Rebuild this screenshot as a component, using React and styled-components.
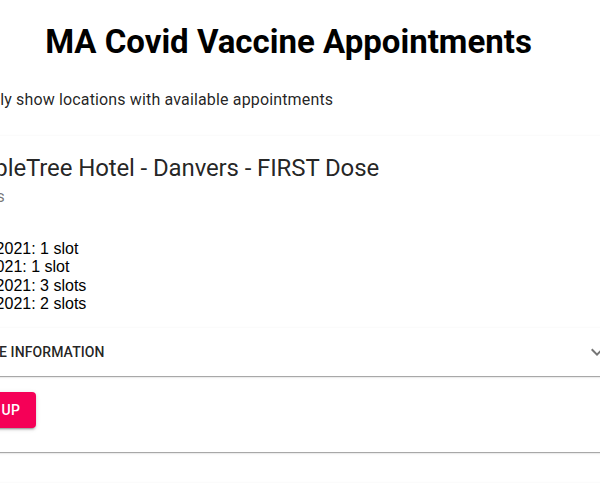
import React from "react";
import styled, { createGlobalStyle } from "styled-components";

const Global = createGlobalStyle`
  html, body { margin: 0; padding: 0; background: #fff; overflow: hidden; }
  body {
    font-family: Roboto, "Liberation Sans", Arial, sans-serif;
    color: rgba(0, 0, 0, 0.87);
    -webkit-font-smoothing: antialiased;
  }
`;

const Page = styled.main`
  width: 705px;
  margin-left: -64px;
`;

const Title = styled.h1`
  margin: 23px 0 19px;
  font-family: Roboto, "Liberation Sans", sans-serif;
  font-weight: 700;
  font-size: 33px;
  line-height: 37px;
  color: #000;
  text-align: center;
`;

const FilterRow = styled.label`
  display: flex;
  align-items: center;
  height: 42px;
  margin-left: 2px;
  margin-top: 1px;
  font-size: 16px;
  line-height: 24px;
  letter-spacing: 0.15px;
  cursor: pointer;
`;

const CheckBox = styled.span`
  display: flex;
  align-items: center;
  justify-content: center;
  width: 42px;
  height: 42px;
  color: rgba(0, 0, 0, 0.54);
`;

const CardList = styled.div`
  display: flex;
  flex-direction: column;
  gap: 31px;
  margin-top: 15px;
`;

const Card = styled.section`
  background: #fff;
  border-radius: 4px;
  box-shadow: 0px 2px 1px -1px rgba(0, 0, 0, 0.2), 0px 1px 1px 0px rgba(0, 0, 0, 0.14),
    0px 1px 3px 0px rgba(0, 0, 0, 0.12);
`;

const CardContent = styled.div`
  padding: 16px 16px 24px;
`;

const CardTitle = styled.h2`
  margin: 0;
  font-size: 24px;
  font-weight: 400;
  line-height: 32px;
  letter-spacing: -0.12px;
`;

const Town = styled.p`
  margin: 0 0 0 -6px;
  padding-top: 1px;
  font-size: 16px;
  line-height: 24px;
  letter-spacing: 0.15px;
  color: rgba(0, 0, 0, 0.54);
`;

const SlotList = styled.div`
  margin: 31px 0 14px;
  padding-left: 8px;
  font-family: "Liberation Sans", Arial, sans-serif;
  font-size: 16px;
  line-height: 18.4px;
  color: #000;
`;

const Accordion = styled.div`
  background: #fff;
  border-radius: 4px;
  box-shadow: 0px 2px 1px -1px rgba(0, 0, 0, 0.2), 0px 1px 1px 0px rgba(0, 0, 0, 0.14),
    0px 1px 3px 0px rgba(0, 0, 0, 0.12);
`;

const Summary = styled.button`
  display: flex;
  align-items: center;
  justify-content: space-between;
  width: 100%;
  min-height: 48px;
  padding: 0 16px;
  border: 0;
  background: transparent;
  font-family: Roboto, sans-serif;
  font-size: 14px;
  font-weight: 500;
  letter-spacing: 0.1px;
  text-transform: uppercase;
  color: rgba(0, 0, 0, 0.87);
  cursor: pointer;
`;

const ExpandIcon = styled.span`
  display: flex;
  padding: 12px;
  margin-right: -12px;
  color: rgba(0, 0, 0, 0.54);
`;

const SignUp = styled.button`
  margin-top: 16px;
  margin-left: -4px;
  min-width: 64px;
  height: 36px;
  padding: 6px 16px;
  border: 0;
  border-radius: 4px;
  background: #f50057;
  color: #fff;
  font-family: Roboto, sans-serif;
  font-size: 14px;
  font-weight: 500;
  letter-spacing: 0.4px;
  text-transform: uppercase;
  box-shadow: 0px 3px 1px -2px rgba(0, 0, 0, 0.2), 0px 2px 2px 0px rgba(0, 0, 0, 0.14),
    0px 1px 5px 0px rgba(0, 0, 0, 0.12);
  cursor: pointer;
`;

const locations = [
  {
    name: "DoubleTree Hotel - Danvers - FIRST Dose",
    town: "Danvers",
    slots: [
      ["3/30/2021", "1 slot"],
      ["4/1/2021", "1 slot"],
      ["4/12/2021", "3 slots"],
      ["4/13/2021", "2 slots"],
    ],
  },
  {
    name: "Eastfield Mall - Springfield",
    town: "Springfield",
    slots: [["4/2/2021", "5 slots"]],
  },
];

function Chevron() {
  return (
    <svg width="24" height="24" viewBox="0 0 24 24" fill="currentColor">
      <path d="M16.59 8.59L12 13.17 7.41 8.59 6 10l6 6 6-6z" />
    </svg>
  );
}

function CheckIcon() {
  return (
    <svg width="24" height="24" viewBox="0 0 24 24" fill="currentColor">
      <path d="M19 5v14H5V5h14m0-2H5c-1.1 0-2 .9-2 2v14c0 1.1.9 2 2 2h14c1.1 0 2-.9 2-2V5c0-1.1-.9-2-2-2z" />
    </svg>
  );
}

export default function App() {
  return (
    <>
      <Global />
      <Page>
        <Title>MA Covid Vaccine Appointments</Title>
        <FilterRow>
          <CheckBox>
            <CheckIcon />
          </CheckBox>
          Only show locations with available appointments
        </FilterRow>
        <CardList>
          {locations.map((loc) => (
            <Card key={loc.name}>
              <CardContent>
                <CardTitle>{loc.name}</CardTitle>
                <Town>{loc.town}</Town>
                <SlotList>
                  {loc.slots.map(([d, s]) => (
                    <div key={d}>
                      {d}: {s}
                    </div>
                  ))}
                </SlotList>
                <Accordion>
                  <Summary>
                    More Information
                    <ExpandIcon>
                      <Chevron />
                    </ExpandIcon>
                  </Summary>
                </Accordion>
                <SignUp>Sign Up</SignUp>
              </CardContent>
            </Card>
          ))}
        </CardList>
      </Page>
    </>
  );
}
